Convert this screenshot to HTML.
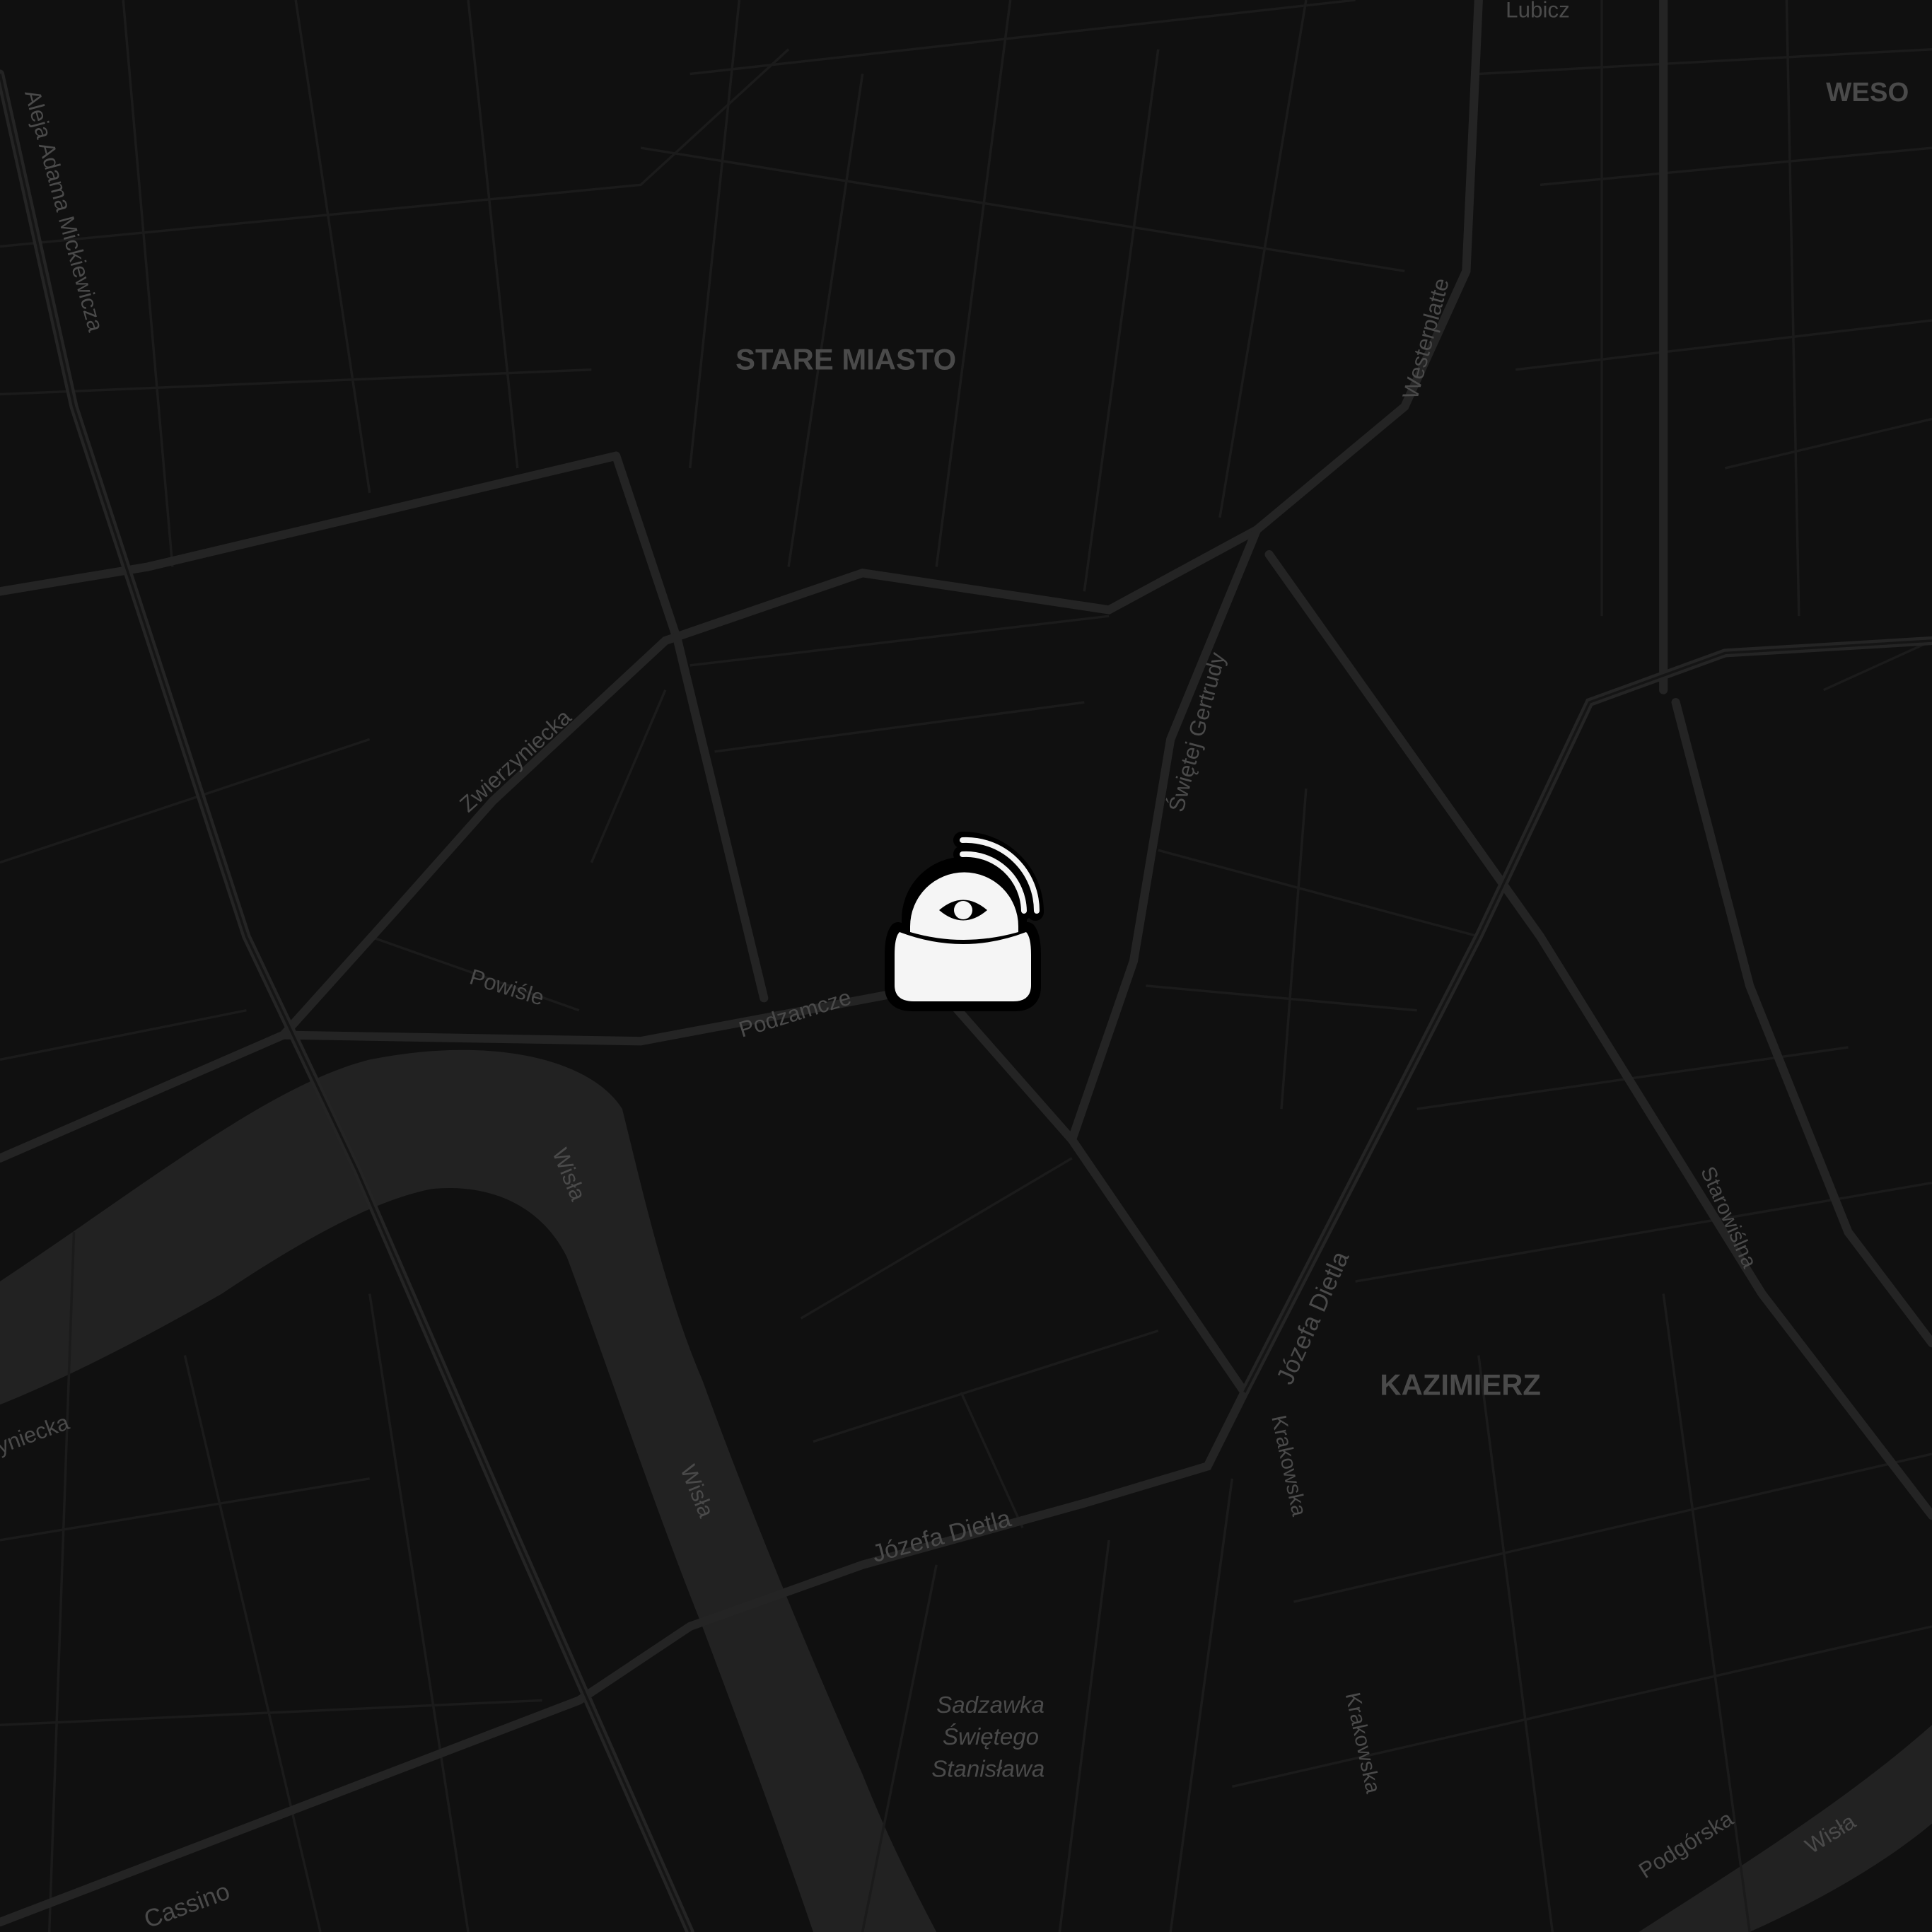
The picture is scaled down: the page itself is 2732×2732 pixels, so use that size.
<!DOCTYPE html>
<html><head><meta charset="utf-8"><style>
html,body{margin:0;padding:0;background:#0f0f0f;}
#w{position:relative;width:2732px;height:2732px;overflow:hidden;background:#0f0f0f;}
svg{position:absolute;left:0;top:0;}
text{font-family:"Liberation Sans",sans-serif;fill:#4a4a4a;}
</style></head><body><div id="w">
<svg width="2732" height="2732" viewBox="0 0 1568 1568">
<rect width="1568" height="1568" fill="#101010"/>
<!-- river -->
<path d="M0 1040 C120 960 220 880 300 860 C400 840 480 860 505 900 C520 960 540 1050 570 1120 C610 1230 660 1350 700 1440 C720 1490 740 1530 760 1568 L660 1568 C630 1480 600 1400 570 1320 C530 1220 490 1100 460 1020 C440 980 400 960 350 965 C300 975 240 1010 180 1050 C110 1090 50 1120 0 1140 Z" fill="#222"/>
<path d="M1330 1568 C1420 1510 1500 1460 1568 1400 L1568 1480 C1520 1520 1460 1550 1420 1568 Z" fill="#222"/>
<!-- minor streets -->
<g stroke="#1b1b1b" stroke-width="2" fill="none">
<path d="M0 200 L520 150 L640 40"/><path d="M100 0 L140 460"/><path d="M240 0 L300 400"/><path d="M0 320 L480 300"/><path d="M380 0 L420 380"/>
<path d="M560 60 L1100 0"/><path d="M520 120 L1140 220"/><path d="M600 0 L560 380"/><path d="M700 60 L640 460"/><path d="M820 0 L760 460"/><path d="M940 40 L880 480"/><path d="M1060 0 L990 420"/>
<path d="M1200 60 L1568 40"/><path d="M1250 150 L1568 120"/><path d="M1230 300 L1568 260"/><path d="M1300 0 L1300 500"/><path d="M1450 0 L1460 500"/>
<path d="M0 700 L300 600"/><path d="M0 860 L200 820"/><path d="M60 1000 L40 1568"/><path d="M0 1250 L300 1200"/><path d="M0 1400 L440 1380"/><path d="M150 1100 L260 1568"/><path d="M300 1050 L380 1568"/>
<path d="M650 1070 L870 940"/><path d="M660 1170 L940 1080"/><path d="M780 1130 L830 1240"/><path d="M700 1568 L760 1270"/><path d="M860 1568 L900 1250"/><path d="M950 1568 L1000 1200"/>
<path d="M940 690 L1200 760"/><path d="M930 800 L1150 820"/><path d="M1060 640 L1040 900"/><path d="M1150 900 L1500 850"/><path d="M1100 1040 L1568 960"/><path d="M1050 1300 L1568 1180"/><path d="M1000 1450 L1568 1320"/><path d="M1200 1100 L1260 1568"/><path d="M1350 1050 L1420 1568"/><path d="M1480 560 L1568 520"/><path d="M1400 380 L1568 340"/>
<path d="M560 540 L900 500"/><path d="M580 610 L880 570"/><path d="M480 700 L540 560"/><path d="M300 760 L470 820"/>
</g>
<!-- main roads -->
<g stroke="#242424" stroke-width="7" fill="none" stroke-linecap="round">
<path d="M0 60 L60 330 L200 760 L290 950 L420 1250 L560 1568"/>
<path d="M0 480 L120 460 L500 370"/>
<path d="M500 370 L550 520 L620 810"/>
<path d="M0 940 L230 840 L320 740 L400 650 L540 520 L700 465 L900 495 L1020 430 L1140 330 L1190 220 L1200 0"/>
<path d="M230 840 L520 845 L760 800 L870 925 L1010 1130 L980 1190 L880 1220 L700 1270 L560 1320 L470 1380 L0 1560"/>
<path d="M870 925 L920 780 L950 600 L1020 430"/>
<path d="M1010 1130 L1200 760 L1290 570 L1400 530 L1568 520"/>
<path d="M1030 450 L1250 760 L1430 1050 L1568 1230"/>
<path d="M1360 570 L1420 800 L1500 1000 L1568 1090"/>
<path d="M1350 0 L1350 560"/>
</g>
<g stroke="#151515" stroke-width="2" fill="none">
<path d="M0 60 L60 330 L200 760 L290 950 L420 1250 L560 1568"/>
<path d="M1010 1130 L1200 760 L1290 570 L1400 530 L1568 520"/>
</g>
<!-- labels -->
<text x="597" y="300" font-size="24" font-weight="bold">STARE MIASTO</text>
<text x="1120" y="1132" font-size="24" font-weight="bold">KAZIMIERZ</text>
<text x="1482" y="82" font-size="22" font-weight="bold">WESO</text>
<text x="1222" y="14" font-size="18">Lubicz</text>
<text x="760" y="1390" font-size="19" font-style="italic">Sadzawka</text>
<text x="765" y="1416" font-size="19" font-style="italic">Świętego</text>
<text x="756" y="1442" font-size="19" font-style="italic">Stanisława</text>
<text font-size="18" transform="translate(380,798) rotate(17)">Powiśle</text>
<text font-size="18" transform="translate(602,842) rotate(-17)">Podzamcze</text>
<text font-size="18" transform="translate(380,660) rotate(-42)">Zwierzyniecka</text>
<text font-size="18" transform="translate(960,660) rotate(-75)">Świętej Gertrudy</text>
<text font-size="18" transform="translate(1150,325) rotate(-75)">Westerplatte</text>
<text font-size="20" transform="translate(710,1268) rotate(-15)">Józefa Dietla</text>
<text font-size="20" transform="translate(1048,1125) rotate(-66)">Józefa Dietla</text>
<text font-size="17" transform="translate(1032,1150) rotate(78)">Krakowska</text>
<text font-size="17" transform="translate(1092,1375) rotate(78)">Krakowska</text>
<text font-size="17" transform="translate(1380,950) rotate(66)">Starowiślna</text>
<text font-size="18" transform="translate(1335,1525) rotate(-32)">Podgórska</text>
<text font-size="18" transform="translate(1470,1505) rotate(-32)">Wisła</text>
<text font-size="18" transform="translate(448,935) rotate(68)">Wisła</text>
<text font-size="18" transform="translate(552,1192) rotate(68)">Wisła</text>
<text font-size="18" transform="translate(20,75) rotate(75)">Aleja Adama Mickiewicza</text>
<text font-size="18" transform="translate(0,1180) rotate(-20)">yniecka</text>
<text font-size="20" transform="translate(120,1565) rotate(-20)">Cassino</text>
</svg>
<!-- icon -->
<svg width="2732" height="2732" viewBox="0 0 2732 2732">
<g stroke="#000" stroke-width="24" stroke-linejoin="round" fill="#000">
<path d="M1287 1320 L1287 1300 A76 76 0 0 1 1440 1300 L1440 1320 Z"/>
<path d="M1270 1316 Q1263 1325 1263 1350 L1263 1395 Q1263 1418 1290 1418 L1435 1418 Q1460 1418 1460 1395 L1460 1350 Q1460 1325 1453 1316 Q1362 1350 1270 1316 Z"/>
</g>
<g stroke="#000" stroke-width="24" fill="none" stroke-linecap="round">
<path d="M1360 1188 A102 102 0 0 1 1464 1290"/><path d="M1360 1208 A84 84 0 0 1 1446 1290"/>
</g>
<path d="M1287 1318 L1287 1310 A76.5 76.5 0 0 1 1440 1310 L1440 1318 Q1362 1340 1287 1318 Z" fill="#f5f5f5"/>
<path d="M1272 1318 Q1265 1325 1265 1350 L1265 1393 Q1265 1416 1292 1416 L1433 1416 Q1458 1416 1458 1393 L1458 1350 Q1458 1325 1451 1318 Q1362 1352 1272 1318 Z" fill="#f5f5f5"/>
<path d="M1328 1287 Q1362 1258 1396 1287 Q1362 1316 1328 1287 Z" fill="#000"/>
<circle cx="1362" cy="1287" r="13" fill="#f5f5f5"/>
<g stroke="#f5f5f5" stroke-width="8" fill="none" stroke-linecap="round">
<path d="M1361 1188 A100 100 0 0 1 1466 1288"/><path d="M1361 1208 A82 82 0 0 1 1448 1288"/>
</g>
</svg>
</div></body></html>
